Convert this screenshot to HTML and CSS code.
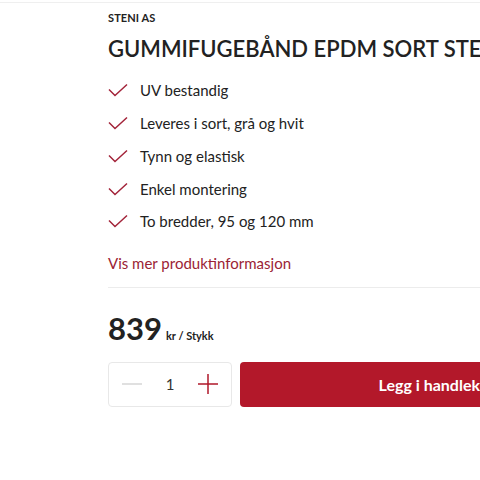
FILE: index.html
```
<!DOCTYPE html>
<html lang="no">
<head>
<meta charset="utf-8">
<link rel="stylesheet" href="styles.css">
</head>
<body>
<div class="topline"></div>
<main class="product">
  <div class="brand">STENI AS</div>
  <h1 class="title">GUMMIFUGEBÅND EPDM SORT STENI</h1>
  <ul class="features">
    <li><svg class="check" viewBox="0 0 20 14" width="20" height="14"><path d="M1 6.5 L7 12.5 L19 1.5" fill="none" stroke="#a3243a" stroke-width="1.5"/></svg><span>UV bestandig</span></li>
    <li><svg class="check" viewBox="0 0 20 14" width="20" height="14"><path d="M1 6.5 L7 12.5 L19 1.5" fill="none" stroke="#a3243a" stroke-width="1.5"/></svg><span>Leveres i sort, grå og hvit</span></li>
    <li><svg class="check" viewBox="0 0 20 14" width="20" height="14"><path d="M1 6.5 L7 12.5 L19 1.5" fill="none" stroke="#a3243a" stroke-width="1.5"/></svg><span>Tynn og elastisk</span></li>
    <li><svg class="check" viewBox="0 0 20 14" width="20" height="14"><path d="M1 6.5 L7 12.5 L19 1.5" fill="none" stroke="#a3243a" stroke-width="1.5"/></svg><span>Enkel montering</span></li>
    <li><svg class="check" viewBox="0 0 20 14" width="20" height="14"><path d="M1 6.5 L7 12.5 L19 1.5" fill="none" stroke="#a3243a" stroke-width="1.5"/></svg><span>To bredder, 95 og 120 mm</span></li>
  </ul>
  <a class="more" href="#">Vis mer produktinformasjon</a>
  <div class="divider"></div>
  <div class="price"><span class="amount">839</span><span class="unit">kr / Stykk</span></div>
  <div class="buy">
    <div class="qty">
      <svg class="qbtn" viewBox="0 0 20 20" width="20" height="20"><path d="M0 10 H20" stroke="#d6d6d6" stroke-width="1.5"/></svg>
      <span class="qval">1</span>
      <svg class="qbtn" viewBox="0 0 20 20" width="20" height="20"><path d="M0 10 H20 M10 0 V20" stroke="#b0182a" stroke-width="1.5"/></svg>
    </div>
    <button class="cart">Legg i handlekurv</button>
  </div>
</main>
</body>
</html>
```
FILE: styles.css
```
html, body {
  margin: 0;
  padding: 0;
  background: #fff;
  overflow: hidden;
}
body {
  font-family: Lato, "Open Sans", sans-serif;
  color: #222;
  width: 480px;
}
.topline {
  height: 2px;
  border-bottom: 1px solid #efefef;
}
.product {
  padding-left: 108px;
  width: 800px;
}
.brand {
  font-size: 11px;
  font-weight: 700;
  margin-top: 8px;
  line-height: 14px;
  letter-spacing: 0.1px;
}
.title {
  margin: 10px 0 0;
  font-size: 22px;
  line-height: 28px;
  font-weight: 600;
  letter-spacing: 0;
  white-space: nowrap;
}
.features {
  list-style: none;
  margin: 11px 0 0;
  padding: 0;
}
.features li {
  display: flex;
  align-items: center;
  height: 32.75px;
  font-size: 15px;
  color: #222;
}
.check {
  margin-right: 12px;
  flex: none;
}
.more {
  display: block;
  margin-top: 15px;
  font-size: 15px;
  line-height: 20px;
  color: #9b2335;
  text-decoration: none;
}
.divider {
  margin-top: 14px;
  height: 1px;
  background: #ececec;
}
.price {
  display: flex;
  align-items: baseline;
  margin-top: 21px;
  height: 38px;
}
.amount {
  font-size: 31px;
  font-weight: 700;
  line-height: 38px;
  margin-right: 4px;
}
.unit {
  font-size: 11px;
  font-weight: 700;
}
.buy {
  display: flex;
  gap: 8px;
  margin-top: 15px;
}
.qty {
  box-sizing: border-box;
  width: 124px;
  height: 45px;
  border: 1px solid #e8e8e8;
  border-radius: 4px;
  display: flex;
  align-items: center;
  justify-content: space-between;
  padding: 0 13px;
}
.qval {
  font-size: 15px;
  color: #333;
}
.cart {
  width: 402px;
  height: 45px;
  border: none;
  border-radius: 4px;
  background: #b3182a;
  color: #fff;
  font-family: Lato, sans-serif;
  font-size: 16px;
  font-weight: 700;
  padding: 0;
}
```
